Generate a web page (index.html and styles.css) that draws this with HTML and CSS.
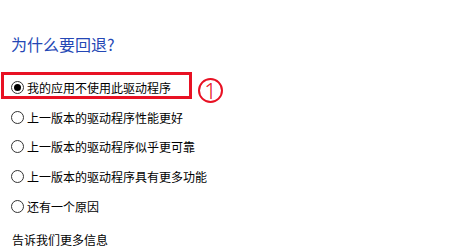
FILE: index.html
```html
<!DOCTYPE html>
<html lang="zh-CN">
<head>
<meta charset="utf-8">
<title>为什么要回退?</title>
<link rel="stylesheet" href="styles.css">
</head>
<body>
<div class="page">
  <h1 class="title">为什么要回退?</h1>
  <div class="options">
    <div class="option first">
      <span class="highlight">
        <span class="radio checked"></span>
        <span class="label">我的应用不使用此驱动程序</span>
      </span>
      <span class="marker">1</span>
    </div>
    <div class="option"><span class="radio"></span><span class="label">上一版本的驱动程序性能更好</span></div>
    <div class="option"><span class="radio"></span><span class="label">上一版本的驱动程序似乎更可靠</span></div>
    <div class="option"><span class="radio"></span><span class="label">上一版本的驱动程序具有更多功能</span></div>
    <div class="option"><span class="radio"></span><span class="label">还有一个原因</span></div>
  </div>
  <p class="more">告诉我们更多信息</p>
</div>
</body>
</html>
```

FILE: styles.css
```css
html, body {
  margin: 0;
  padding: 0;
  background: #ffffff;
}
body {
  font-family: "Noto Sans CJK SC", "Noto Sans", sans-serif;
  color: #000000;
  overflow: hidden;
}
.page {
  padding-top: 33px;
}
.title {
  margin: 0 0 0 11px;
  font-size: 16px;
  line-height: 22px;
  font-weight: 400;
  color: #2447b5;
}
.options {
  margin-top: 18px;
  display: flex;
  flex-direction: column;
}
.option {
  height: 29.6px;
  display: flex;
  align-items: center;
  padding-left: 11px;
}
.option.first {
  padding-left: 1px;
}
.highlight {
  display: flex;
  align-items: center;
  height: 17px;
  padding: 4px 18px 0 7px;
  border: 3px solid #e81123;
  margin-bottom: 4px;
}
.radio {
  box-sizing: border-box;
  width: 13px;
  height: 13px;
  border: 1px solid #333333;
  border-radius: 50%;
  display: flex;
  align-items: center;
  justify-content: center;
  flex: none;
}
.radio.checked::after {
  content: "";
  width: 7px;
  height: 7px;
  border-radius: 50%;
  background: #000000;
}
.label {
  margin-left: 3px;
  font-size: 12px;
  line-height: 17px;
  white-space: nowrap;
}
.marker {
  box-sizing: border-box;
  width: 25px;
  height: 25px;
  margin-left: 6px;
  margin-top: 5px;
  border: 2px solid #e81123;
  border-radius: 50%;
  color: #e81123;
  font-family: "Noto Sans", sans-serif;
  font-weight: 300;
  font-size: 22px;
  line-height: 21px;
  display: flex;
  align-items: center;
  justify-content: center;
}
.more {
  margin: 13.5px 0 0 12px;
  font-size: 12px;
  line-height: 12px;
}
```
